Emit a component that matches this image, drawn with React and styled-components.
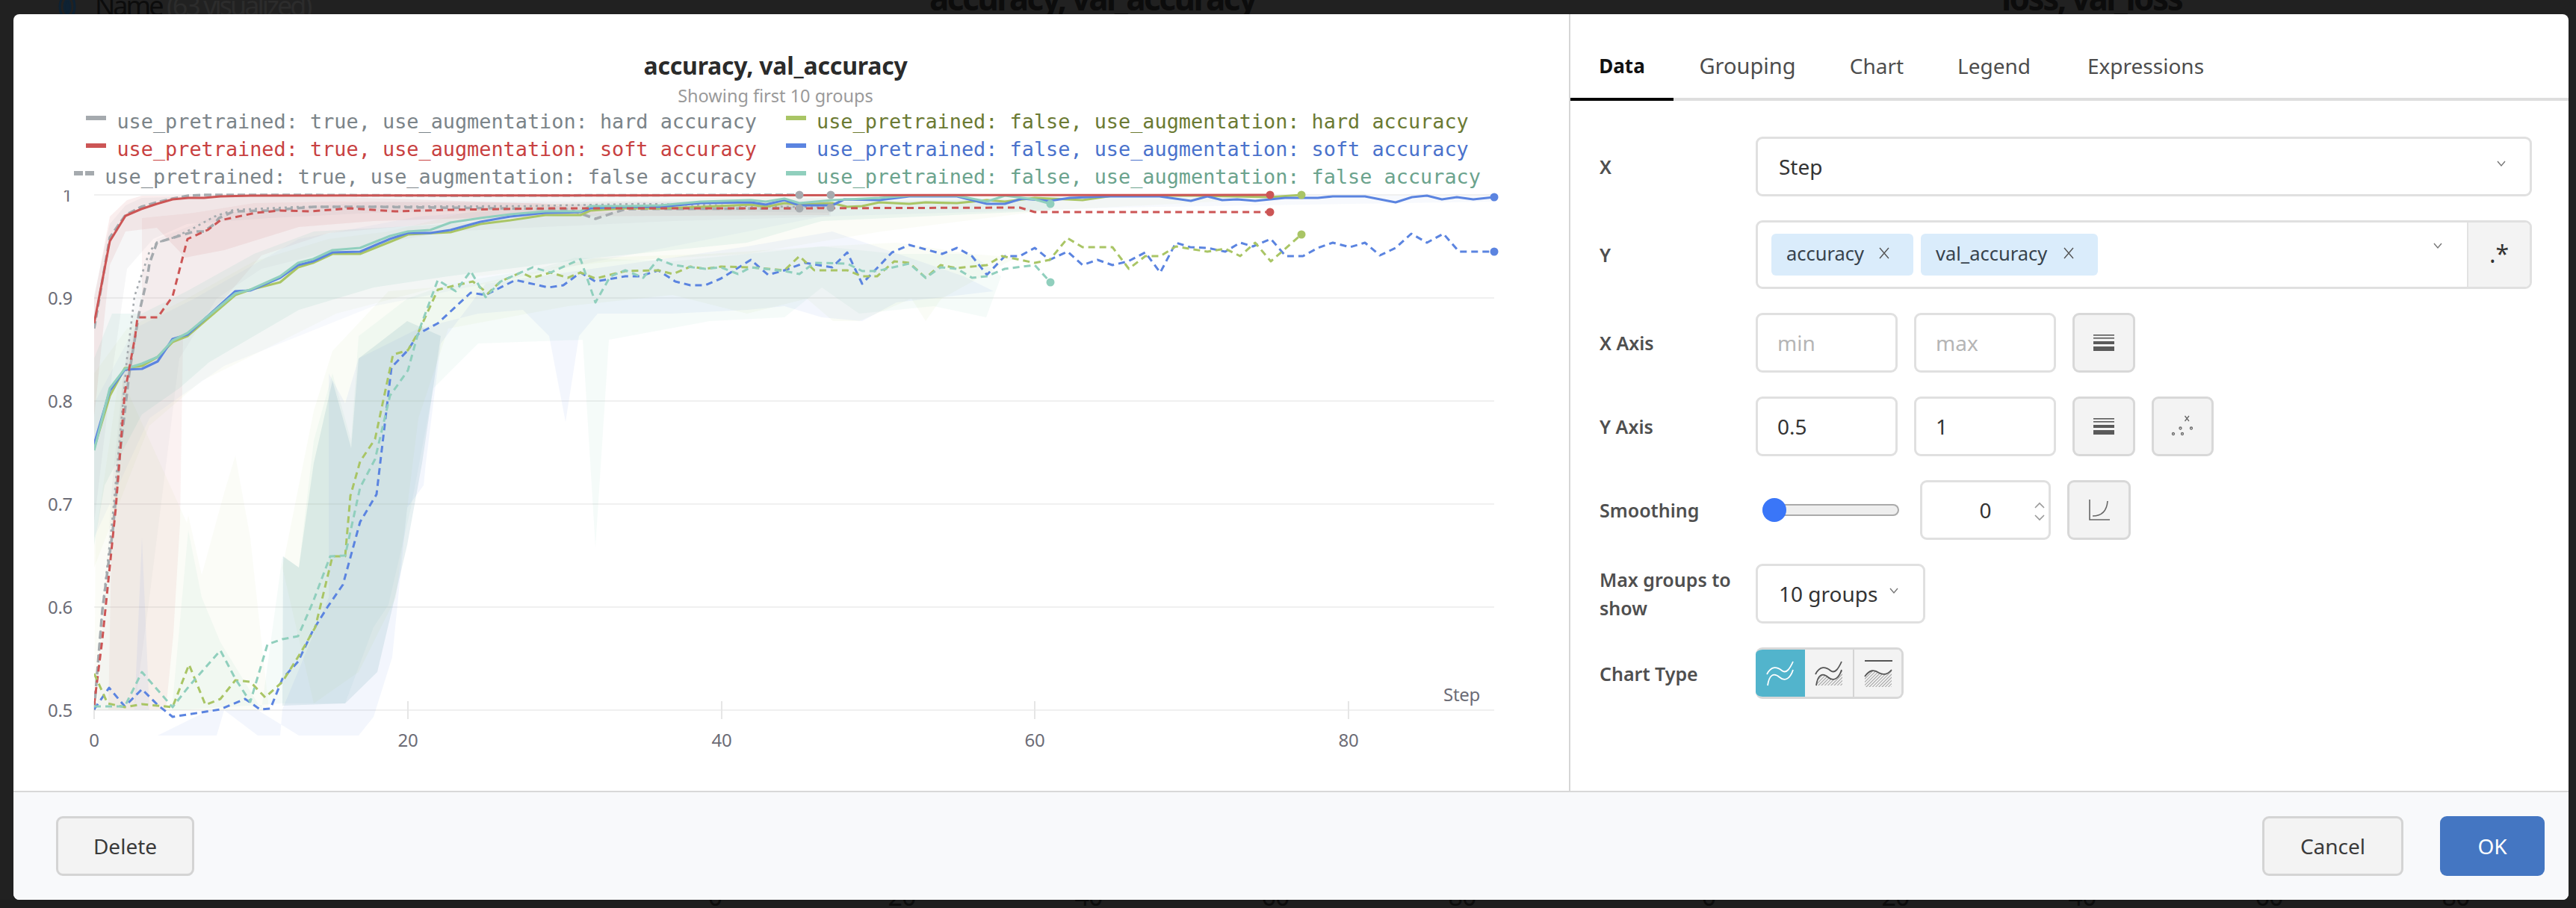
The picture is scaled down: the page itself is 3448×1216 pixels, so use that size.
import React from "react";
import styled, { createGlobalStyle } from "styled-components";

const Global = createGlobalStyle`
  html, body { margin: 0; padding: 0; background: #212121; }
  body { font-family: "Noto Sans", sans-serif; color: #333; }
`;

const Page = styled.div`
  width: 3448px; height: 1216px; display: flex; flex-direction: column; justify-content: space-between;
  overflow: hidden; background: #212121; position: relative;
`;
const TopStrip = styled.div`
  height: 19px; overflow: hidden; display: flex; align-items: flex-start; color: #0c0c0c; padding-left: 78px;
`;
const BackEye = styled.svg` width: 24px; height: 36px; margin-top: -9px; flex: none; `;
const BackName = styled.div`
  font-size: 36px; line-height: 36px; margin: -10px 0 0 25px; width: 1117px; flex: none; white-space: nowrap;
  letter-spacing: -3px;
  span { color: #2c2c2c; }
`;
const BackTitle = styled.div`
  font-size: 44px; line-height: 44px; font-weight: 700; margin-top: -25px; flex: none; white-space: nowrap;
  width: ${p => p.$w}px; letter-spacing: -2.5px;
`;
const BottomStrip = styled.div`
  height: 11px; overflow: hidden; display: flex; padding-left: 832px; color: #0c0c0c; background: #1e1e1e;
`;
const BackTick = styled.div`
  width: 250px; flex: none; text-align: center; font-size: 34px; line-height: 34px; margin-top: -22px;
  margin-right: ${p => p.$gap || 0}px; letter-spacing: -1px;
`;

const Dialog = styled.div`
  position: absolute; left: 18px; top: 19px; width: 3420px; height: 1186px; background: #fff; border-radius: 8px;
  overflow: hidden; display: flex; flex-direction: column;
`;
const Body = styled.div` flex: 1; min-height: 0; display: flex; `;
const ChartPane = styled.div`
  width: 2082px; flex: none; border-right: 2px solid #d6d6d6; box-sizing: content-box; padding-top: 49px;
  display: flex; flex-direction: column;
`;
const ChartTitle = styled.div`
  text-align: center; font-size: 32px; font-weight: 700; line-height: 40px; color: #2b2b2b; letter-spacing: -0.2px;
  margin-right: 42px;
`;
const ChartSub = styled.div`
  text-align: center; font-size: 23.5px; line-height: 32px; color: #9a9a9a; margin: 4px 42px 0 0;
`;
const LegendGrid = styled.div`
  display: grid; grid-template-columns: 995px 1fr; column-gap: 39px; font-family: "DejaVu Sans Mono", monospace;
`;
const LegendItem = styled.div`
  display: flex; align-items: center; gap: 14px; height: 37px; white-space: nowrap; font-size: 26.85px;
  color: ${p => p.$text}; justify-content: ${p => (p.$right ? "flex-start" : "flex-end")};
`;
const LegendMark = styled.span`
  width: 27px; height: 6px; flex: none; margin-top: -9px;
  background: ${p => p.$dashed
    ? `repeating-linear-gradient(90deg, ${p.$color} 0 12px, transparent 12px 15px)`
    : p.$color};
`;
const ChartSvg = styled.svg` width: 2082px; height: 760px; display: block; `;

const SettingsPane = styled.div` flex: 1; min-width: 0; display: flex; flex-direction: column; `;
const Tabs = styled.div`
  height: 116px; box-sizing: border-box; display: flex; border-bottom: 4px solid #dedede;
`;
const Tab = styled.div`
  width: ${p => p.$w}px; flex: none; height: 116px; box-sizing: border-box; padding-top: 48px; text-align: center;
  font-size: ${p => p.$size || 28}px; line-height: 42px; font-weight: ${p => (p.$active ? 700 : 400)};
  color: ${p => (p.$active ? "#111" : "#4d4d4d")};
  border-bottom: 4px solid ${p => (p.$active ? "#000" : "transparent")};
`;
const Form = styled.div`
  padding: 48px 49px 0 39px; display: flex; flex-direction: column; gap: 32px;
`;
const Row = styled.div` display: flex; align-items: center; min-height: ${p => (p.$compact ? 69 : 80)}px; `;
const Label = styled.div`
  width: 209px; flex: none; font-size: 25px; font-weight: 600; line-height: 38px; color: #4f4f4f; padding-right: 20px;
  box-sizing: border-box;
`;
const Controls = styled.div` flex: 1; min-width: 0; display: flex; align-items: center; gap: ${p => p.$gap ?? 22}px; `;
const Box = styled.div`
  box-sizing: border-box; height: 80px; background: #fff; border: 3px solid #e0e0e0; border-radius: 9px;
  display: flex; align-items: center; font-size: 28px;
`;
const SelectBox = styled(Box)`
  ${p => (p.$w ? `width: ${p.$w}px; flex: none;` : "flex: 1; min-width: 0;")}
  padding: 0 ${p => p.$pr || 31}px 0 28px; justify-content: space-between;
  color: #333;
`;
const ChevronWrap = styled.span` display: flex; margin-top: -8px; `;
const MultiBox = styled(Box)`
  flex: 1; min-width: 0; height: 92px; padding-left: 18px; gap: 10px; overflow: hidden;
`;
const Chip = styled.div`
  width: ${p => p.$w}px; height: 56px; box-sizing: border-box; display: flex; align-items: center; justify-content: space-between;
  padding: 0 31px 4px 20px; border-radius: 6px; background: #daecfb; font-size: 25.5px; color: #37424c; flex: none;
`;
const MultiChevron = styled.div` margin-left: auto; margin-right: 22px; display: flex; margin-top: -16px; `;
const RegexBtn = styled.div`
  width: 84px; height: 100%; flex: none; background: #f3f3f3; border-left: 2px solid #e2e2e2; display: flex;
  align-items: flex-start; justify-content: center; font-size: 32px; line-height: 44px; color: #333; padding-top: 20px; box-sizing: border-box;
`;
const NumInput = styled(Box)`
  width: ${p => p.$w || 190}px; flex: none; padding-left: 26px; color: ${p => (p.$ph ? "#b5b5b5" : "#333")};
`;
const IconBtn = styled.div`
  box-sizing: border-box; width: ${p => p.$w || 84}px; height: 80px; flex: none; background: #f3f3f3;
  border: 3px solid #d8d8d8; border-radius: 9px; display: flex; align-items: center; justify-content: center;
`;
const SliderTrack = styled.div`
  width: 183px; height: 16px; margin-left: 9px; flex: none; box-sizing: border-box; background: #eee; border: 2px solid #aaa;
  border-left: none; border-radius: 8px; position: relative;
`;
const SliderThumb = styled.div`
  position: absolute; left: 0; top: -10px; width: 32px; height: 32px; border-radius: 50%; background: #3a76f8;
`;
const SpinBox = styled(Box)`
  width: 175px; flex: none; justify-content: center; padding-left: 0; position: relative; margin-left: 6px;
`;
const Spin = styled.svg` position: absolute; right: 4px; top: 26px; `;
const ChartTypeGroup = styled.div`
  display: flex; height: 69px; width: 198px; box-sizing: border-box; border: 3px solid #d8d8d8; border-left: none; border-radius: 9px; overflow: hidden;
  background: #f3f3f3;
`;
const ChartTypeBtn = styled.div`
  width: ${p => p.$w}px; flex: none; height: 100%; display: flex; align-items: center; justify-content: center; box-sizing: border-box;
  background: ${p => (p.$active ? "#52b4cc" : "#f3f3f3")};
  border-right: ${p => (p.$divider ? "2px solid #d4d4d4" : "none")};
`;
const Footer = styled.div`
  flex: none; height: 146px; box-sizing: border-box; border-top: 2px solid #d8d8d8; background: #f8f9fb;
  display: flex; align-items: center; padding: 0 32px 0 57px; gap: 49px;
`;
const Btn = styled.div`
  box-sizing: border-box; height: 80px; width: ${p => p.$w}px; flex: none; border-radius: 9px; display: flex; align-items: center; justify-content: center;
  font-size: 28px;
  margin-right: ${p => (p.$push ? "auto" : "0")};
  background: ${p => (p.$primary ? "#4476c2" : "#f3f3f3")};
  border: ${p => (p.$primary ? "none" : "3px solid #d4d4d4")};
  color: ${p => (p.$primary ? "#fff" : "#3a3a3a")};
`;

const C = { red: "#cc5555", grey: "#a5aaae", green: "#a9c565", blue: "#5b84e0", teal: "#90cfbd" };

const legend = [
  ["use_pretrained: true, use_augmentation: hard accuracy", C.grey, "#7b8489", false, false],
  ["use_pretrained: false, use_augmentation: hard accuracy", C.green, "#6b7a33", false, true],
  ["use_pretrained: true, use_augmentation: soft accuracy", C.red, "#c84141", false, false],
  ["use_pretrained: false, use_augmentation: soft accuracy", C.blue, "#4a72cc", false, true],
  ["use_pretrained: true, use_augmentation: false accuracy", C.grey, "#7b8489", true, false],
  ["use_pretrained: false, use_augmentation: false accuracy", C.teal, "#6ba38d", false, true],
];

const toPts = a => a.map(p => p.join(",")).join(" ");

const bands = [
  // pretrained runs
  [C.red, 0.1, [[126,400],[147,290],[170,268],[190,262],[400,262],[700,272],[900,276],[1110,270],[1110,288],[700,290],[500,296],[400,304],[300,335],[248,345],[210,305],[168,310],[147,355],[126,560]]],
  [C.red, 0.08, [[145,950],[150,700],[165,500],[190,400],[190,292],[260,285],[340,272],[450,270],[720,272],[800,284],[600,298],[440,312],[350,342],[300,400],[252,445],[245,450],[241,700],[232,850],[222,950]]],
  [C.grey, 0.1, [[126,700],[126,395],[147,300],[168,275],[190,265],[300,262],[500,262],[1000,262],[1112,265],[1112,285],[800,280],[500,285],[360,292],[250,300],[205,320],[170,360],[150,500]]],
  [C.grey, 0.08, [[130,951],[140,800],[150,650],[165,500],[185,380],[210,320],[300,285],[500,270],[800,270],[1112,270],[1112,290],[900,296],[600,310],[430,340],[350,360],[290,400],[240,480],[200,800],[180,951]]],
  // train runs
  [C.teal, 0.14, [[126,480],[150,420],[190,420],[250,390],[340,340],[420,310],[600,300],[800,285],[1000,272],[1406,266],[1406,282],[1100,296],[1000,325],[800,345],[600,370],[500,385],[400,415],[280,485],[240,520],[190,555],[140,650],[126,730]]],
  [C.green, 0.05, [[126,500],[170,440],[250,400],[340,350],[440,320],[520,310],[650,278],[800,270],[1000,264],[1300,262],[1742,262],[1742,264],[1400,282],[1180,310],[1000,340],[820,350],[640,370],[450,420],[270,510],[200,570],[126,760]]],
  [C.blue, 0.05, [[126,540],[180,440],[260,400],[400,320],[560,290],[800,272],[1000,268],[1500,262],[2000,262],[2000,270],[1500,278],[1100,290],[900,330],[700,370],[500,410],[300,490],[200,560],[126,720]]],
  // val runs
  [C.teal, 0.09, [[230,951],[252,710],[270,800],[295,860],[350,950],[378,745],[400,760],[420,590],[445,500],[470,590],[480,450],[545,400],[600,380],[660,370],[720,360],[770,345],[900,350],[1000,340],[1100,330],[1200,340],[1300,340],[1340,370],[1320,425],[1250,410],[1150,420],[1100,385],[1050,425],[950,430],[815,455],[797,733],[780,455],[640,460],[580,520],[550,680],[520,810],[500,840],[462,942],[378,942],[240,951]]],
  ["#6fa8b0", 0.17, [[378,945],[379,745],[400,760],[420,620],[445,510],[470,600],[480,480],[545,430],[590,450],[565,620],[545,730],[505,900],[462,942]]],
  [C.blue, 0.08, [[180,951],[190,720],[200,951]]],
  [C.blue, 0.07, [[211,985],[290,985],[300,951],[345,985],[375,985],[378,950],[440,800],[440,500],[462,540],[480,480],[560,440],[640,420],[700,415],[735,450],[757,565],[775,450],[800,420],[900,420],[1000,415],[1050,410],[1100,425],[1154,430],[1200,405],[1330,390],[1290,370],[1114,310],[1000,330],[900,345],[650,380],[590,460],[570,620],[567,650],[545,680],[525,880],[500,960],[480,985],[400,985],[345,951],[280,951]]],
  [C.green, 0.05, [[126,951],[128,720],[160,500],[250,700],[252,690],[270,770],[300,660],[315,610],[335,720],[360,951]]],
  [C.green, 0.06, [[378,760],[420,550],[445,470],[520,390],[640,380],[800,345],[950,340],[1100,330],[1200,325],[1300,340],[1360,345],[1260,400],[1239,430],[1220,400],[1150,430],[1115,430],[1080,400],[1000,420],[900,395],[760,410],[600,440],[560,560],[530,800],[480,900],[420,942]]],
];

const topSolid = [[126,433],[147,323],[168,289],[189,280],[210,273],[231,267],[252,265],[273,265],[295,263],[336,262],[1700,261]];
const topGrey = [[126,440],[147,318],[168,288],[189,277],[210,271],[231,266],[252,262],[273,261],[400,261],[600,262],[1070,261]];
const redVal = [[126,944],[137,856],[155,680],[167,526],[181,450],[184,425],[211,425],[231,397],[251,320],[278,308],[295,295],[342,285],[375,282],[415,283],[469,279],[529,283],[603,281],[737,279],[1050,279],[1365,278],[1385,284],[1700,284]];
const greyVal = [[126,951],[137,817],[151,710],[161,603],[173,500],[186,420],[197,373],[200,353],[210,325],[233,318],[260,310],[273,310],[287,300],[293,292],[313,283],[360,282],[420,277],[500,277],[760,280],[797,293],[837,280],[1070,279]];
const greyDot = [[126,951],[137,817],[150,700],[160,590],[170,480],[180,397],[200,337],[210,325],[233,318],[260,305],[287,290],[313,281],[400,277],[700,276],[860,273],[1112,278]];

const trainBlue = [[126,595],[147,523],[167,495],[190,494],[211,484],[231,454],[251,448],[315,390],[335,389],[375,372],[399,355],[419,350],[445,338],[482,337],[522,320],[546,312],[576,312],[603,308],[643,297],[683,290],[730,285],[777,284],[790,279],[837,277],[884,277],[938,272],[1005,271],[1025,274],[1050,268],[1070,275],[1114,275],[1130,267],[1177,268],[1217,263],[1281,263],[1321,273],[1345,273],[1368,266],[1405,269],[1432,265],[1485,263],[1552,263],[1594,269],[1616,263],[1636,268],[1656,267],[1680,269],[1720,265],[1764,265],[1784,263],[1827,263],[1868,271],[1890,264],[1910,262],[1930,267],[1950,264],[1972,267],[2000,264]];
const trainGreen = [[126,600],[147,530],[167,493],[190,490],[211,478],[231,458],[251,450],[315,395],[335,388],[375,378],[399,358],[419,352],[445,340],[482,340],[522,324],[546,314],[603,311],[643,300],[683,295],[730,288],[777,288],[790,282],[837,279],[884,279],[938,277],[1005,274],[1025,277],[1050,272],[1070,274],[1114,272],[1134,277],[1154,276],[1177,271],[1217,273],[1239,271],[1281,272],[1321,268],[1345,270],[1385,265],[1429,267],[1449,268],[1490,262],[1600,262],[1700,264],[1742,261]];
const trainTeal = [[126,603],[147,520],[167,494],[190,487],[211,478],[231,456],[251,446],[315,393],[335,388],[375,370],[399,352],[419,347],[445,335],[482,332],[522,316],[546,310],[576,308],[603,298],[643,292],[683,287],[730,283],[777,283],[790,276],[837,276],[884,275],[938,270],[1005,268],[1025,270],[1050,266],[1070,272],[1114,268],[1177,265],[1217,262],[1281,262],[1321,270],[1345,262],[1385,267],[1406,273]];

const valBlue = [[126,950],[146,921],[167,946],[190,923],[211,944],[231,960],[295,950],[328,936],[348,950],[362,949],[378,909],[399,886],[419,844],[439,812],[459,783],[482,699],[504,662],[524,492],[546,469],[560,447],[586,433],[630,392],[650,395],[690,375],[734,385],[754,382],[777,365],[797,377],[837,370],[857,370],[881,362],[904,377],[924,382],[944,382],[965,373],[1005,348],[1028,368],[1050,362],[1077,352],[1114,358],[1134,338],[1154,380],[1194,338],[1217,328],[1261,340],[1281,332],[1301,343],[1321,368],[1345,343],[1365,343],[1385,332],[1405,348],[1429,337],[1449,355],[1469,348],[1489,355],[1510,350],[1533,338],[1553,365],[1574,325],[1593,331],[1616,332],[1640,337],[1660,325],[1677,330],[1701,320],[1721,343],[1744,343],[1764,332],[1784,325],[1807,331],[1827,325],[1847,342],[1868,332],[1889,313],[1910,325],[1932,313],[1953,337],[2000,337]];
const valGreen = [[126,902],[144,942],[167,947],[190,943],[231,947],[253,890],[275,944],[295,936],[315,911],[335,913],[355,934],[378,913],[402,875],[422,840],[445,745],[462,745],[469,664],[482,618],[502,588],[526,475],[546,469],[560,445],[586,388],[610,382],[633,377],[653,393],[670,377],[697,365],[713,372],[737,365],[760,372],[777,365],[797,373],[837,363],[881,362],[901,367],[924,357],[944,360],[965,357],[1005,358],[1050,362],[1070,343],[1090,362],[1134,362],[1154,370],[1174,370],[1197,350],[1217,352],[1239,372],[1259,355],[1281,359],[1321,355],[1341,343],[1385,352],[1405,348],[1429,319],[1449,331],[1489,331],[1511,360],[1533,343],[1553,343],[1574,330],[1616,337],[1640,333],[1660,343],[1680,325],[1701,350],[1742,314]];
const valTeal = [[126,946],[167,946],[190,900],[231,947],[253,919],[295,871],[315,909],[335,940],[358,863],[378,856],[399,852],[419,806],[442,745],[462,744],[482,653],[502,615],[522,530],[546,496],[560,445],[586,375],[610,390],[630,363],[650,398],[670,377],[697,365],[713,358],[737,365],[777,347],[797,405],[817,370],[837,362],[861,372],[881,347],[901,355],[944,360],[965,358],[988,367],[1005,358],[1050,363],[1070,367],[1090,352],[1134,353],[1154,363],[1174,363],[1217,353],[1239,372],[1259,358],[1281,360],[1301,372],[1321,370],[1345,360],[1385,355],[1406,378]];

const lines = [
  [topGrey, C.grey, 3.5, "10 5"], [greyDot, C.grey, 2.6, "3 5"], [greyVal, C.grey, 3.5, "10 6"],
  [trainGreen, C.green, 3.2], [trainBlue, C.blue, 3.2], [trainTeal, C.teal, 3.2],
  [topSolid, C.red, 3], [redVal, C.red, 3, "9 6"],
  [valBlue, C.blue, 3, "9 6"], [valGreen, C.green, 3, "9 6"], [valTeal, C.teal, 3, "9 6"],
];
const dots = [
  [1070,261,C.grey],[1112,261,C.grey],[1070,279,C.grey],[1112,278,C.grey],[1700,261,C.red],[1700,284,C.red],
  [1742,261,C.green],[1742,314,C.green],[2000,264,C.blue],[2000,337,C.blue],[1406,273,C.teal],[1406,378,C.teal],
];
const yTicks = [["1",261],["0.9",399],["0.8",537],["0.7",675],["0.6",813],["0.5",951]];
const xTicks = [[0,126],[20,546],[40,966],[60,1385],[80,1805]];

const AxisText = styled.text`
  font-family: "Noto Sans", sans-serif; font-size: 24px; fill: #6c6c76; letter-spacing: -0.3px;
`;

function Chart() {
  return (
    <ChartSvg viewBox="18 255 2082 760">
      <defs>
        <clipPath id="plotClip"><rect x="126" y="255" width="1880" height="740" /></clipPath>
      </defs>
      {yTicks.map(([t, y]) => (
        <React.Fragment key={t}>
          <line x1="126" x2="2000" y1={y} y2={y} stroke="#f0f0f0" strokeWidth="2" />
          <AxisText x="97" y={y + 9} textAnchor="end">{t}</AxisText>
        </React.Fragment>
      ))}
      {xTicks.map(([t, x]) => (
        <React.Fragment key={t}>
          <line x1={x} x2={x} y1="939" y2="963" stroke="#e6e6e6" strokeWidth="2" />
          <AxisText x={x} y="1000" textAnchor="middle">{t}</AxisText>
        </React.Fragment>
      ))}
      <AxisText x="1981" y="939" textAnchor="end">Step</AxisText>
      <g clipPath="url(#plotClip)">
        {bands.map(([c, o, p], i) => <polygon key={i} points={toPts(p)} fill={c} fillOpacity={o} />)}
        {lines.map(([p, c, w, d], i) => (
          <polyline key={i} points={toPts(p)} fill="none" stroke={c} strokeWidth={w} strokeDasharray={d} strokeLinejoin="round" />
        ))}
        {dots.map(([x, y, c], i) => <circle key={i} cx={x} cy={y} r="5.5" fill={c} />)}
      </g>
    </ChartSvg>
  );
}

const Chevron = () => (
  <ChevronWrap>
    <svg width="14" height="10" viewBox="0 0 14 10"><path d="M2 2 L7 8 L12 2" fill="none" stroke="#777" strokeWidth="1.4" /></svg>
  </ChevronWrap>
);
const Cross = () => (
  <svg width="16" height="16" viewBox="0 0 16 16"><path d="M2 1 L14 15 M14 1 L2 15" stroke="#555" strokeWidth="1.4" /></svg>
);
const Lines = () => (
  <svg width="28" height="22" viewBox="0 0 28 22" fill="#5a5a5a">
    <rect x="0" y="0" width="28" height="1.6" /><rect x="0" y="4" width="28" height="1.6" /><rect x="0" y="9" width="28" height="4" /><rect x="0" y="16" width="28" height="6" />
  </svg>
);
const Scatter = () => (
  <svg width="32" height="30" viewBox="0 0 32 30" fill="none" stroke="#666" strokeWidth="1.3">
    <path d="M18.5 1 L24 8 M24 1 L18.5 8" />
    <circle cx="12.5" cy="17.5" r="1.5" /><circle cx="27" cy="17.5" r="1.5" /><circle cx="3" cy="25" r="1.5" /><circle cx="15" cy="25" r="1.5" />
  </svg>
);
const Curve = () => (
  <svg width="30" height="30" viewBox="0 0 30 30" fill="none" stroke="#666">
    <path d="M2 1 V28 H29" strokeWidth="1.6" />
    <path d="M6 23 C18 23 25 16 26 3" strokeWidth="1.6" />
  </svg>
);
const Hatch = ({ id }) => (
  <pattern id={id} width="3" height="3" patternUnits="userSpaceOnUse" patternTransform="rotate(45)">
    <line x1="0" y1="0" x2="0" y2="3" stroke="#666" strokeWidth="1.2" />
  </pattern>
);
const TypeLine = () => (
  <svg width="38" height="36" viewBox="0 0 38 36" fill="none" stroke="#fff" strokeWidth="1.8">
    <path d="M1 19 C7 7 15 9 21 14 C27 19 32 11 36 2" />
    <path d="M2 34 C4 20 10 16 18 23 C26 30 33 23 36 13" />
  </svg>
);
const TypeArea = () => (
  <svg width="38" height="36" viewBox="0 0 38 36" fill="none" stroke="#555" strokeWidth="1.8">
    <defs><Hatch id="h1" /></defs>
    <path d="M2 34 C4 20 10 16 18 23 C26 30 33 23 37 13 V34 Z" fill="url(#h1)" stroke="none" />
    <path d="M1 19 C7 7 15 9 21 14 C27 19 32 11 36 2" />
    <path d="M2 34 C4 20 10 16 18 23 C26 30 33 23 36 13" />
  </svg>
);
const TypeBand = () => (
  <svg width="38" height="36" viewBox="0 0 38 36" fill="none" stroke="#555" strokeWidth="1.8">
    <defs><Hatch id="h2" /></defs>
    <path d="M1 1 H38" />
    <path d="M1 22 C8 12 14 13 20 17 C27 21 32 19 37 13 V36 H1 Z" fill="url(#h2)" stroke="none" />
    <path d="M1 22 C8 12 14 13 20 17 C27 21 32 19 37 13" />
  </svg>
);

export default function App() {
  return (
    <Page>
      <Global />
      <TopStrip>
        <BackEye viewBox="0 0 24 36" fill="none" stroke="#0e2233" strokeWidth="3">
          <ellipse cx="12" cy="18" rx="10" ry="16" /><ellipse cx="12" cy="18" rx="4" ry="9" fill="#0e2233" />
        </BackEye>
        <BackName>Name <span>(63 visualized)</span></BackName>
        <BackTitle $w={1435}>accuracy, val_accuracy</BackTitle>
        <BackTitle $w={300}>loss, val_loss</BackTitle>
      </TopStrip>
      <BottomStrip>
        {["0", "20", "40", "60"].map(t => <BackTick key={t}>{t}</BackTick>)}
        <BackTick $gap={80}>80</BackTick>
        {["0", "20", "40", "60", "80"].map(t => <BackTick key={"b" + t}>{t}</BackTick>)}
      </BottomStrip>
      <Dialog>
        <Body>
          <ChartPane>
            <ChartTitle>accuracy, val_accuracy</ChartTitle>
            <ChartSub>Showing first 10 groups</ChartSub>
            <LegendGrid>
              {legend.map(([t, c, tc, dashed, right]) => (
                <LegendItem key={t} $text={tc} $right={right}>
                  <LegendMark $color={c} $dashed={dashed} />
                  <span>{t}</span>
                </LegendItem>
              ))}
            </LegendGrid>
            <Chart />
          </ChartPane>
          <SettingsPane>
            <Tabs>
              <Tab $w={138} $active $size={26}>Data</Tab>
              <Tab $w={198} $size={29}>Grouping</Tab>
              <Tab $w={148}>Chart</Tab>
              <Tab $w={166}>Legend</Tab>
              <Tab $w={240}>Expressions</Tab>
            </Tabs>
            <Form>
              <Row>
                <Label>X</Label>
                <SelectBox>Step<Chevron /></SelectBox>
              </Row>
              <Row>
                <Label>Y</Label>
                <MultiBox>
                  <Chip $w={190}>accuracy<Cross /></Chip>
                  <Chip $w={237}>val_accuracy<Cross /></Chip>
                  <MultiChevron><Chevron /></MultiChevron>
                  <RegexBtn>.*</RegexBtn>
                </MultiBox>
              </Row>
              <Row>
                <Label>X Axis</Label>
                <Controls>
                  <NumInput $ph>min</NumInput>
                  <NumInput $ph>max</NumInput>
                  <IconBtn><Lines /></IconBtn>
                </Controls>
              </Row>
              <Row>
                <Label>Y Axis</Label>
                <Controls>
                  <NumInput>0.5</NumInput>
                  <NumInput>1</NumInput>
                  <IconBtn><Lines /></IconBtn>
                  <IconBtn $w={83}><Scatter /></IconBtn>
                </Controls>
              </Row>
              <Row>
                <Label>Smoothing</Label>
                <Controls $gap={22}>
                  <SliderTrack><SliderThumb /></SliderTrack>
                  <SpinBox>0
                    <Spin width="16" height="26" viewBox="0 0 16 26" fill="none" stroke="#999" strokeWidth="1.6">
                      <path d="M2 8 L8 2 L14 8 M2 18 L8 24 L14 18" />
                    </Spin>
                  </SpinBox>
                  <IconBtn $w={85}><Curve /></IconBtn>
                </Controls>
              </Row>
              <Row>
                <Label>Max groups to show</Label>
                <SelectBox $w={227} $pr={32}>10 groups<Chevron /></SelectBox>
              </Row>
              <Row $compact>
                <Label>Chart Type</Label>
                <ChartTypeGroup>
                  <ChartTypeBtn $w={66} $active><TypeLine /></ChartTypeBtn>
                  <ChartTypeBtn $w={66} $divider><TypeArea /></ChartTypeBtn>
                  <ChartTypeBtn $w={63}><TypeBand /></ChartTypeBtn>
                </ChartTypeGroup>
              </Row>
            </Form>
          </SettingsPane>
        </Body>
        <Footer>
          <Btn $w={185} $push>Delete</Btn>
          <Btn $w={189}>Cancel</Btn>
          <Btn $w={140} $primary>OK</Btn>
        </Footer>
      </Dialog>
    </Page>
  );
}
